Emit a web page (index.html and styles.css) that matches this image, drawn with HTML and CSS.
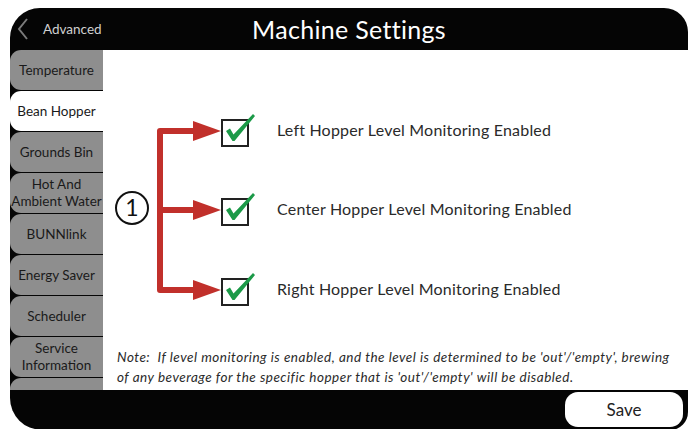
FILE: index.html
```html
<!DOCTYPE html>
<html lang="en">
<head>
  <meta charset="UTF-8">
  <title>Machine Settings</title>
  <link rel="stylesheet" href="styles.css">
</head>
<body>

  <div class="device">
    <header class="topbar">
      <a class="back" href="#">
        <svg class="chevron" width="12" height="22" viewBox="0 0 12 22">
          <path d="M10 1 L2 11 L10 21" fill="none" stroke="#7a7a7a" stroke-width="2"/>
        </svg>
        <span>Advanced</span>
      </a>
      <h1 class="title">Machine Settings</h1>
      <span></span>
    </header>

    <div class="main">
      <nav class="tabs">
        <div class="tab">Temperature</div>
        <div class="tab active">Bean Hopper</div>
        <div class="tab">Grounds Bin</div>
        <div class="tab">Hot And<br>Ambient Water</div>
        <div class="tab">BUNNlink</div>
        <div class="tab">Energy Saver</div>
        <div class="tab">Scheduler</div>
        <div class="tab">Service<br>Information</div>
        <div class="tab"></div>
      </nav>

      <section class="content">
        <div class="diagram">
          <svg class="callout" width="108" height="240" viewBox="0 0 108 240">
            <circle cx="19" cy="117" r="16" fill="none" stroke="#111" stroke-width="2"/>
            <text x="19" y="125" text-anchor="middle" class="callout-num">1</text>
            <path d="M84 40 H47 V199 H84 M47 119 H84" fill="none" stroke="#c1302b" stroke-width="6" stroke-linejoin="round"/>
            <polygon points="80,30 108,40 80,50" fill="#c1302b"/>
            <polygon points="80,109 108,119 80,129" fill="#c1302b"/>
            <polygon points="80,189 108,199 80,209" fill="#c1302b"/>
          </svg>

          <div class="options">
            <div class="option">
              <svg class="check" width="36" height="36" viewBox="0 0 36 36">
                <rect x="1" y="7" width="26" height="26" fill="#fff" stroke="#222" stroke-width="2"/>
                <polygon points="5,18 9,15.5 12.5,21.5 32,1 34,3 13.5,28 11.5,28" fill="#1c9a48"/>
              </svg>
              <span>Left Hopper Level Monitoring Enabled</span>
            </div>
            <div class="option">
              <svg class="check" width="36" height="36" viewBox="0 0 36 36">
                <rect x="1" y="7" width="26" height="26" fill="#fff" stroke="#222" stroke-width="2"/>
                <polygon points="5,18 9,15.5 12.5,21.5 32,1 34,3 13.5,28 11.5,28" fill="#1c9a48"/>
              </svg>
              <span>Center Hopper Level Monitoring Enabled</span>
            </div>
            <div class="option">
              <svg class="check" width="36" height="36" viewBox="0 0 36 36">
                <rect x="1" y="7" width="26" height="26" fill="#fff" stroke="#222" stroke-width="2"/>
                <polygon points="5,18 9,15.5 12.5,21.5 32,1 34,3 13.5,28 11.5,28" fill="#1c9a48"/>
              </svg>
              <span>Right Hopper Level Monitoring Enabled</span>
            </div>
          </div>
        </div>

        <p class="note">Note:&nbsp; If level monitoring is enabled, and the level is determined to be 'out'/'empty', brewing<br>of any beverage for the specific hopper that is 'out'/'empty' will be disabled.</p>
      </section>
    </div>

    <footer class="bottombar">
      <button class="save">Save</button>
    </footer>
  </div>

</body>
</html>
```

FILE: styles.css
```css
body { margin: 0; background: #fff; font-family: Lato, "Noto Sans", sans-serif; color: #222; overflow: hidden; }

.device { margin: 8px 6px 0 10px; height: 422px; background: #050505; border-radius: 30px 24px 18px 32px; display: grid; grid-template-rows: 42px 340px 1fr; overflow: hidden; }

.topbar { display: grid; grid-template-columns: 1fr auto 1fr; align-items: center; }
.back { display: flex; align-items: center; gap: 14px; padding-left: 7px; color: #d0d0d0; text-decoration: none; font-size: 13.5px; }
.chevron { display: block; }
.title { margin: 0; color: #fff; font-size: 25px; font-weight: 400; letter-spacing: 0.3px; }

.main { display: grid; grid-template-columns: 93px 1fr; }

.tabs { display: flex; flex-direction: column; gap: 1px; overflow: hidden; background: #050505; }
.tab { flex: 0 0 40px; display: flex; align-items: center; justify-content: center; text-align: center; background: #8e8e8e; border-radius: 11px 0 0 11px; font-size: 13.5px; line-height: 17px; white-space: nowrap; color: #1a1a1a; }
.tab.active { background: #fff; }

.content { background: #fff; padding: 41px 0 0 10px; }
.diagram { display: flex; }
.callout { display: block; }
.callout-num { font-family: Lato, sans-serif; font-size: 23px; fill: #111; }

.options { display: flex; flex-direction: column; }
.option { height: 79.5px; display: flex; align-items: center; gap: 20px; font-size: 16px; letter-spacing: 0.2px; color: #2a2a2a; }
.option span { padding-bottom: 3px; }
.check { display: block; }

.note { margin: 16px 0 0 4px; font-size: 13.5px; line-height: 20px; letter-spacing: 0.5px; font-style: italic; color: #2a2a2a; }

.bottombar { display: flex; justify-content: flex-end; align-items: flex-start; padding: 2px 5px 0 0; }
.save { width: 118px; height: 35px; border: none; border-radius: 13px; background: #fff; font-family: Lato, sans-serif; font-size: 17px; color: #222; }
```
